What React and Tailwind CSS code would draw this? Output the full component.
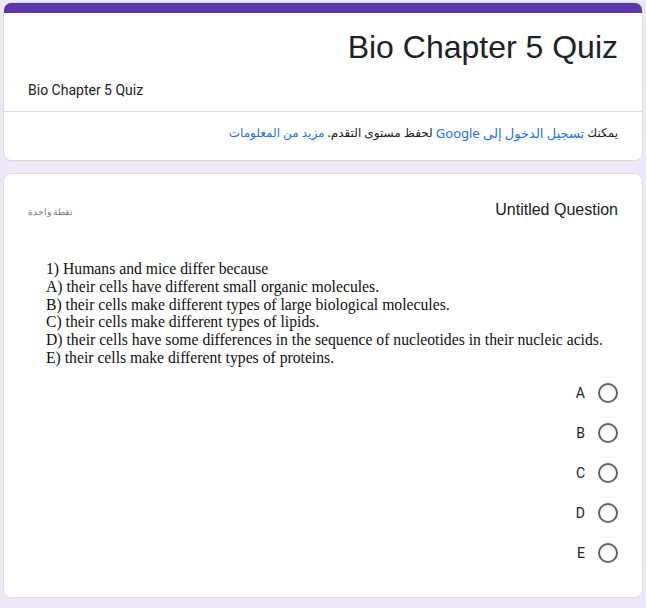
import React from "react";

const options = ["A", "B", "C", "D", "E"];

const lines = [
  "1) Humans and mice differ because",
  "A) their cells have different small organic molecules.",
  "B) their cells make different types of large biological molecules.",
  "C) their cells make different types of lipids.",
  "D) their cells have some differences in the sequence of nucleotides in their nucleic acids.",
  "E) their cells make different types of proteins.",
];

function HeaderCard() {
  return (
    <div className="bg-white rounded-lg border border-[#dadce0] overflow-hidden">
      <div className="h-[10px] bg-[#5d37aa]" />
      <div className="px-6 pt-[14px] pb-[11px]">
        <h1 className="text-[32px] leading-[40px] text-[#202124] font-['Liberation_Sans',Arial,sans-serif]">
          Bio Chapter 5 Quiz
        </h1>
        <p
          dir="ltr"
          className="mt-[13px] text-left text-[14px] leading-5 text-[#202124] font-['Roboto',sans-serif]"
        >
          Bio Chapter 5 Quiz
        </p>
      </div>
      <div className="border-t border-[#dadce0] px-6 pt-[11px] pb-[17px]">
        <div className="h-5 flex items-center text-[12px] leading-5 text-[#202124] font-['Noto_Sans','DejaVu_Sans',sans-serif] whitespace-pre">
          يمكنك <span className="text-[#1a73e8] text-[13px]">تسجيل الدخول إلى Google</span> لحفظ مستوى التقدم. <span className="text-[#1a73e8]">مزيد من المعلومات</span>
        </div>
      </div>
    </div>
  );
}

function QuestionCard() {
  return (
    <div className="mt-3 bg-white rounded-lg border border-[#dadce0] px-6 pt-[24px] pb-[34px]">
      <div className="flex items-center justify-between h-6">
        <span className="text-[16px] leading-6 text-[#202124] font-['Liberation_Sans',Arial,sans-serif]">
          Untitled Question
        </span>
        <span className="text-[9px] leading-4 text-[#70757a] pt-[4px] font-['Noto_Sans',sans-serif]">
          نقطة واحدة
        </span>
      </div>
      <div
        dir="ltr"
        className="mt-[38px] pl-[18px] text-left text-[15.7px] leading-[17.8px] text-[#111] font-['Liberation_Serif','Times_New_Roman',serif]"
      >
        {lines.map((l) => (
          <div key={l}>{l}</div>
        ))}
      </div>
      <div className="mt-[16px] flex flex-col gap-[20px]">
        {options.map((o) => (
          <div key={o} className="h-5 flex items-center gap-[13px]">
            <span className="w-5 h-5 rounded-full border-2 border-[#5f6368]" />
            <span className="text-[14px] leading-5 text-[#202124] font-['Roboto',sans-serif]">{o}</span>
          </div>
        ))}
      </div>
    </div>
  );
}

export default function App() {
  return (
    <div dir="rtl" className="min-h-screen bg-[#ede7f6] px-[3px] pt-[2px] pb-3">
      <HeaderCard />
      <QuestionCard />
    </div>
  );
}
